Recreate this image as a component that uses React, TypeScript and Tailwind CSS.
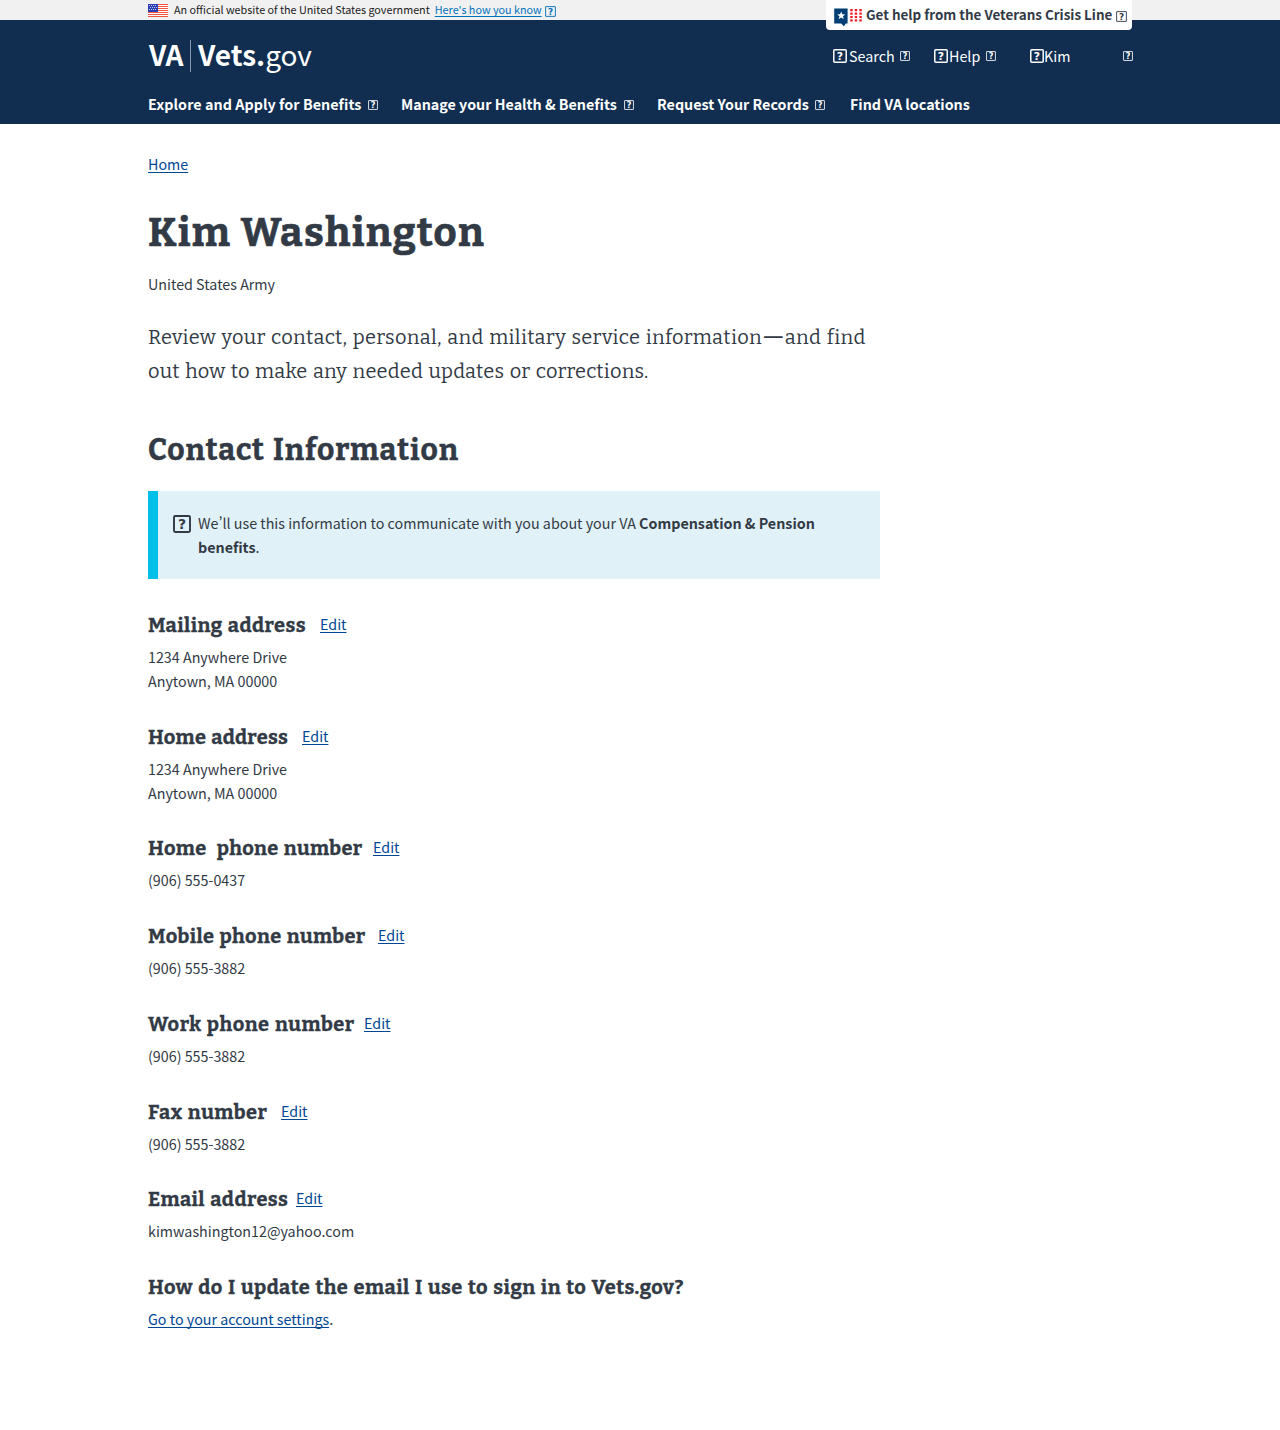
import React from 'react';

function Mark({ className, thick = false }: { className: string; thick?: boolean }) {
  return (
    <svg viewBox="0 0 18 18" className={`shrink-0 ${className}`} fill="none" aria-hidden="true">
      <rect x="1" y="1" width="16" height="16" rx={thick ? 1.2 : 0.4} stroke="currentColor" strokeWidth={thick ? 1.9 : 1.5} />
      <text x="9" y="14" textAnchor="middle" fill="currentColor" className={thick ? "font-['DejaVu_Sans'] text-[14px] font-bold" : "font-['DejaVu_Sans'] text-[14.5px] font-bold"}>?</text>
    </svg>
  );
}

function Flag() {
  return (
    <svg viewBox="0 0 20 13" className="h-[13px] w-5 shrink-0" shapeRendering="crispEdges" aria-hidden="true">
      <rect width="20" height="13" fill="#fff" />
      {[0, 2, 4, 6, 8, 10, 12].map((y) => (
        <rect key={y} y={y} width="20" height="1" fill="#f0563d" />
      ))}
      <rect width="10" height="8" fill="#2a3fb5" />
      {[1, 3, 5].map((y) => [1, 3, 5, 7].map((x) => <rect key={`${x}-${y}`} x={x + (y === 3 ? 1 : 0)} y={y} width="1" height="1" fill="#c3c9ee" />))}
    </svg>
  );
}

function CrisisIcon() {
  return (
    <svg viewBox="0 0 29 19" className="h-[19px] w-[29px] shrink-0" aria-hidden="true">
      <path d="M0.2 0.4h13.4v15h-1.8L10 18.2 7.2 15.4H0.2z" fill="#003e73" />
      <path d="M7.2 3.4l1.1 2.9 3 .1-2.4 1.9.9 3-2.6-1.7-2.6 1.7.9-3-2.4-1.9 3-.1z" fill="#fff" />
      {[1.1, 4.6, 7.9, 11.3].map((y) => [16.2, 20.7, 25.3].map((x) => <rect key={`${x}-${y}`} x={x} y={y} width="2.5" height="2.2" rx="0.5" fill="#ee1c25" />))}
    </svg>
  );
}

const link = 'text-[#004795] underline decoration-1 underline-offset-[2px] [text-decoration-skip-ink:none]';

const sections = [
  { title: 'Mailing address', top: 'mt-[34px]', fit: 'w-[172px] tracking-[0.42px]', lines: ['1234 Anywhere Drive', 'Anytown, MA 00000'] },
  { title: 'Home address', top: 'mt-[31px]', fit: 'w-[154px] tracking-[0.25px]', lines: ['1234 Anywhere Drive', 'Anytown, MA 00000'] },
  { title: 'Home  phone number', top: 'mt-[30px]', fit: 'w-[225px] tracking-[0.33px]', lines: ['(906) 555-0437'] },
  { title: 'Mobile phone number', top: 'mt-[31px]', fit: 'w-[230px] tracking-[0.36px]', lines: ['(906) 555-3882'] },
  { title: 'Work phone number', top: 'mt-[31px]', fit: 'w-[216px] tracking-[0.5px]', lines: ['(906) 555-3882'] },
  { title: 'Fax number', top: 'mt-[31px]', fit: 'w-[133px] tracking-[0.45px]', lines: ['(906) 555-3882'] },
  { title: 'Email address', top: 'mt-[30px]', fit: 'w-[148px] tracking-[0.43px]', lines: ['kimwashington12@yahoo.com'] },
];

export default function App() {
  return (
    <div className="min-h-[1430px] bg-white font-['Noto_Sans_CJK_SC',sans-serif] text-[14.3px] leading-6 text-[#323a45]">
      <div className="h-5 bg-[#f1f1f1]">
        <div className="relative mx-auto flex h-5 w-[984px] items-center text-[10.79px] leading-5 text-[#212121]">
          <div className="mt-px"><Flag /></div>
          <span className="-mt-[2px] ml-[6px]">An official website of the United States government</span>
          <a className="-mt-[2px] ml-[5px] text-[#0071bb] underline decoration-1 underline-offset-[2px] [text-decoration-skip-ink:none]">Here's how you know</a>
          <Mark className="mt-[2px] ml-[3px] size-[11px] text-[#0071bb]" />
          <div className="absolute top-0 right-0 flex h-[30px] w-[306px] items-center rounded-b bg-white pl-2 text-[13.43px] font-bold text-[#323a45]">
            <div className="mt-[5px]"><CrisisIcon /></div>
            <span className="-mt-[2px] ml-[3px]">Get help from the Veterans Crisis Line</span>
            <Mark className="mt-[2px] ml-[4px] size-[11px]" />
          </div>
        </div>
      </div>

      <header className="h-[104px] bg-[#112e51] text-white">
        <div className="mx-auto w-[984px]">
          <div className="flex h-[72px] items-start">
            <div className="mt-5 ml-px flex h-8 items-center text-[28px] leading-8">
              <span className="-mt-1 w-[41px] font-bold tracking-[-0.3px]">VA</span>
              <span className="h-8 w-px bg-[#8896a8]" />
              <span className="-mt-1 ml-[7px] font-bold">Vets.</span>
              <span className="-mt-1">gov</span>
            </div>
            <div className="mt-6 ml-auto flex h-6 w-[299px] items-center">
              <Mark thick className="size-[14px]" />
              <span className="ml-[2px] w-[51px]">Search</span>
              <Mark className="size-[10px]" />
              <Mark thick className="ml-[24px] size-[14px]" />
              <span className="ml-px w-[37px]">Help</span>
              <Mark className="size-[10px]" />
              <Mark thick className="ml-[34px] size-[14px]" />
              <span>Kim</span>
              <Mark className="-mr-px ml-auto size-[10px]" />
            </div>
          </div>
          <nav className="flex h-6 items-center font-bold">
            <span className="w-[220px] tracking-[0.06px]">Explore and Apply for Benefits</span>
            <Mark className="mt-px size-[10px]" />
            <span className="ml-[23px] w-[223px]">Manage your Health &amp; Benefits</span>
            <Mark className="mt-px size-[10px]" />
            <span className="ml-[23px] w-[158px]">Request Your Records</span>
            <Mark className="mt-px size-[10px]" />
            <span className="ml-[25px]">Find VA locations</span>
          </nav>
        </div>
      </header>

      <main className="mx-auto w-[984px] pt-7">
        <a className={link}>Home</a>
        <h1 className="mt-[33px] h-12 font-['Bitter','DejaVu_Serif_Condensed',serif] text-[40px] leading-[48px] font-bold tracking-[1.35px] [word-spacing:0.8px] [-webkit-text-stroke:0.6px_#323a45]">Kim Washington</h1>
        <p className="mt-[15px]">United States Army</p>
        <p className="mt-[24px] font-['Bitter','DejaVu_Serif_Condensed',serif] text-[20px] leading-[34px] tracking-[0.21px] whitespace-nowrap [word-spacing:1.2px]">
          <span className="tracking-[0.3px]">Review your contact, personal, and military service information<span className="align-[-1px] text-[26px] leading-[20px]">—</span>and find</span><br />
          out how to make any needed updates or corrections.
        </p>
        <h2 className="mt-[42px] h-10 font-['Bitter','DejaVu_Serif_Condensed',serif] text-[30px] leading-10 font-bold tracking-[0.92px] [word-spacing:2px] [-webkit-text-stroke:0.45px_#323a45]">Contact Information</h2>
        <div className="mt-[21px] flex h-[88px] w-[732px] border-l-[10px] border-[#02bfe7] bg-[#e1f1f8] pt-5 pl-4">
          <Mark thick className="mt-[4px] -ml-px size-[18px]" />
          <p className="ml-[7px] w-[640px]">
            We<span className="font-['Noto_Sans_CJK_KR']" lang="ko">’</span>ll use this information to communicate with you about your VA <b>Compensation &amp; Pension</b><br /><b>benefits</b>.
          </p>
        </div>
        {sections.map((s) => (
          <section key={s.title} className={s.top}>
            <div className="flex h-6 items-center">
              <h3 className={`font-['Bitter','DejaVu_Serif_Condensed',serif] text-[20px] font-bold whitespace-pre [word-spacing:1.2px] [-webkit-text-stroke:0.3px_#323a45] ${s.fit}`}>{s.title}</h3>
              <a className={`-mt-[2px] ${link}`}>Edit</a>
            </div>
            <div className="pt-[8px] pb-px">{s.lines.map((l) => <p key={l}>{l}</p>)}</div>
          </section>
        ))}
        <section className="mt-[31px]">
          <h3 className="font-['Bitter','DejaVu_Serif_Condensed',serif] text-[20px] font-bold tracking-[0.46px] [word-spacing:1.2px] [-webkit-text-stroke:0.3px_#323a45]">How do I update the email I use to sign in to Vets.gov?</h3>
          <p className="mt-[8px]"><a className={link}>Go to your account settings</a>.</p>
        </section>
      </main>
    </div>
  );
}
